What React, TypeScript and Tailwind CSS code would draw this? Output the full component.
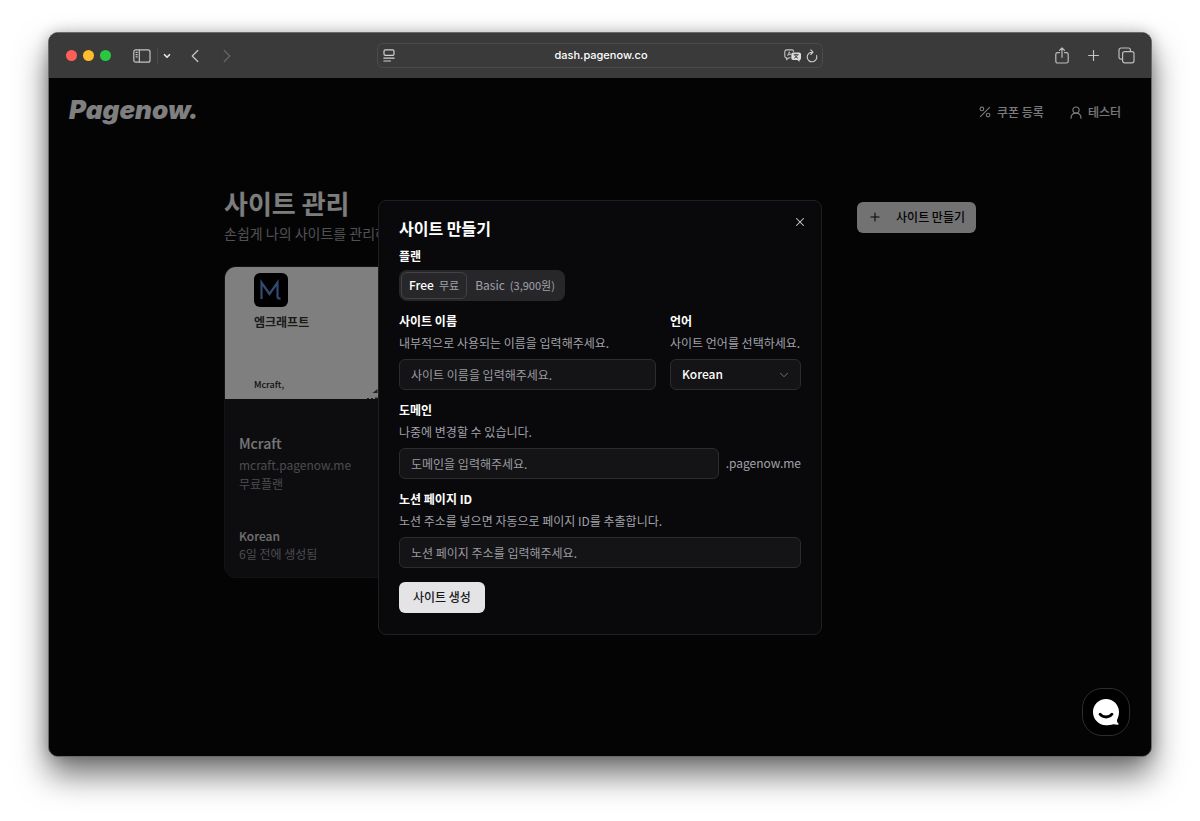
import React, { useState } from "react";
import { ChevronDown, ChevronLeft, ChevronRight, Plus, X } from "lucide-react";

interface FieldProps {
  id: string;
  label: string;
  description: string;
  className?: string;
  children: React.ReactNode;
}

const plans = [
  { name: "Free", price: "무료" },
  { name: "Basic", price: "(3,900원)" },
];

const inputStyle =
  "h-[31px] w-full min-w-0 rounded-md border border-[#2c2c2f] bg-[#141416] px-[11px] text-xs text-white placeholder:text-[#9b9ba3] outline-none";

const SidebarIcon = () => (
  <svg width="18" height="14" viewBox="0 0 18 14" fill="none" stroke="#c4c4c4" strokeWidth="1.2">
    <rect x="0.8" y="0.8" width="16.2" height="12.4" rx="2" />
    <path d="M6.3 1v12M2.6 3.4h2M2.6 5.6h2M2.6 7.8h2" />
  </svg>
);

const ReaderIcon = () => (
  <svg width="12" height="13" viewBox="0 0 12 13" fill="none" stroke="#d0d0d0" strokeWidth="1.2" strokeLinecap="round">
    <rect x="1" y="0.8" width="10" height="5.6" rx="1.4" />
    <path d="M0.9 9.2h10.2M0.9 12h6.6" />
  </svg>
);

const TranslateIcon = () => (
  <svg width="18" height="13" viewBox="0 0 18 13" fill="none">
    <path
      d="M6.5 8.8H4.8L2.6 10.7V8.8A1.8 1.8 0 0 1 .8 7V2.8A1.9 1.9 0 0 1 2.7.9h5.1a1.9 1.9 0 0 1 1.9 1.8"
      stroke="#c4c4c4"
      strokeWidth="1.1"
      strokeLinejoin="round"
    />
    <path d="M3.6 7 5.3 2.8 6.6 6M4.2 5.6h2.1" stroke="#c4c4c4" strokeWidth="0.9" />
    <path d="M9.2 3.4h5.9a1.9 1.9 0 0 1 1.9 1.9v3.9a1.8 1.8 0 0 1-1.4 1.8v1.8L13.2 11h-4a1.9 1.9 0 0 1-1.9-1.9V5.3a1.9 1.9 0 0 1 1.9-1.9Z" fill="#dcdcdc" />
    <path d="M9.6 5.7h5M12.1 4.7v1M10.8 5.9c.4 1.4 1.5 2.6 3.3 3.3M13.4 5.9c-.4 1.4-1.5 2.6-3.3 3.3" stroke="#3a3a3a" strokeWidth="0.9" />
  </svg>
);

const ReloadIcon = () => (
  <svg width="12" height="14" viewBox="0 0 12 14" fill="none" stroke="#cfcfcf" strokeWidth="1.1" strokeLinecap="round" strokeLinejoin="round">
    <path d="M10.6 6.6A4.8 4.8 0 1 1 6.400 3.200M4.800 .8l2.200 2.400-2.200 2.300" />
  </svg>
);

const ShareIcon = () => (
  <svg width="14" height="17" viewBox="0 0 14 17" fill="none" stroke="#bdbdbd" strokeWidth="1.2" strokeLinecap="round" strokeLinejoin="round">
    <path d="M4.4 5.7H2.6A1.8 1.8 0 0 0 .8 7.5v6.7A1.8 1.8 0 0 0 2.6 16h8.8a1.8 1.8 0 0 0 1.8-1.8V7.5a1.8 1.8 0 0 0-1.8-1.8H9.6M7 10.3V1M4.5 3.4 7 .9l2.5 2.5" />
  </svg>
);

const TabsIcon = () => (
  <svg width="17" height="17" viewBox="0 0 17 17" fill="none" stroke="#bdbdbd" strokeWidth="1.2">
    <rect x="4.6" y="4.6" width="11.4" height="11.2" rx="2" />
    <path d="M4.6 12.2H3A2 2 0 0 1 1 10.2V3a2 2 0 0 1 2-2h7.4a2 2 0 0 1 2 2v1.6" />
  </svg>
);

const PercentIcon = () => (
  <svg width="12" height="12" viewBox="0 0 12 12" fill="none" stroke="currentColor" strokeWidth="1.1" strokeLinecap="round">
    <path d="M10.600 1.400 1.400 10.600" />
    <circle cx="2.900" cy="2.900" r="1.800" />
    <circle cx="9.100" cy="9.100" r="1.800" />
  </svg>
);

const UserIcon = () => (
  <svg width="12" height="13" viewBox="0 0 12 13" fill="none" stroke="currentColor" strokeWidth="1.2" strokeLinecap="round">
    <circle cx="6" cy="4.1" r="3.1" />
    <path d="M1 12.2c.1-3 1.9-5 5-5s4.900 2 5 5" />
  </svg>
);

const Toolbar = () => (
  <div className="grid h-[45px] grid-cols-[1fr_minmax(0,446px)_1fr] items-center bg-[#3a3a3a]">
    <div className="flex items-center pl-[17px]">
      <div className="flex gap-1.5">
        <span className="size-[11px] rounded-full bg-[#fe5f58]" />
        <span className="size-[11px] rounded-full bg-[#febb2e]" />
        <span className="size-[11px] rounded-full bg-[#29c840]" />
      </div>
      <button aria-label="Sidebar" className="ml-[22px]">
        <SidebarIcon />
      </button>
      <span className="ml-1.5 h-4 w-px bg-[#4a4a4a]" />
      <button aria-label="Tab groups" className="ml-1 text-[#e4e4e4]">
        <ChevronDown size={10} strokeWidth={4} />
      </button>
      <button aria-label="Back" className="ml-3 text-[#c4c4c4]">
        <ChevronLeft size={22} strokeWidth={1.4} />
      </button>
      <button aria-label="Forward" className="ml-2.5 text-[#666666]">
        <ChevronRight size={22} strokeWidth={1.4} />
      </button>
    </div>
    <div className="flex h-[25px] items-center rounded-md border border-[#4b4b4b] px-1">
      <div className="flex w-9 shrink-0 pl-px">
        <ReaderIcon />
      </div>
      <p className="flex-1 text-center font-['Inter',sans-serif] text-[11px] font-medium text-white">dash.pagenow.co</p>
      <div className="flex shrink-0 items-center gap-1">
        <TranslateIcon />
        <ReloadIcon />
      </div>
    </div>
    <div className="flex items-center justify-end gap-4 pr-4">
      <button aria-label="Share">
        <ShareIcon />
      </button>
      <button aria-label="New tab" className="text-[#c4c4c4]">
        <Plus size={17} strokeWidth={1.6} />
      </button>
      <button aria-label="Tab overview">
        <TabsIcon />
      </button>
    </div>
  </div>
);

const SiteCard = () => (
  <article className="mt-[23px] w-60 overflow-hidden rounded-xl border border-[#27272a] bg-[#1a1a1e]">
    <div className="relative h-[132px] bg-white px-[29px] pt-1.5 text-black">
      <div className="flex size-[34px] items-center justify-center rounded-md bg-black">
        <svg width="24" height="22" viewBox="0 0 24 22" fill="none" stroke="#6595e0" strokeWidth="2.200">
          <path d="M2.500 20V3.500L10.500 15 18.500 3.500V17.500c0 1.500.8 2.200 3 2.200" />
        </svg>
      </div>
      <p className="mt-1.5 text-xs leading-[18px] font-bold text-[#37352f]">엠크래프트</p>
      <p className="mt-[46px] text-[9px] leading-4 font-medium text-[#222222]">Mcraft,</p>
      <svg className="absolute bottom-0 left-[141px]" width="16" height="11" viewBox="0 0 16 11" fill="#444444">
        <path d="M6.500 5 11.500 1v4ZM1 10h2v1H1ZM5 10h2v1H5ZM9 9.500h3V11H9Z" />
      </svg>
    </div>
    <div className="px-3.5 pt-[34px] pb-3.5 text-xs leading-[18px] text-[#96969e]">
      <h2 className="text-sm leading-5 font-medium text-[#ececee]">Mcraft</h2>
      <p className="mt-0.5 leading-5">mcraft.pagenow.me</p>
      <p>무료플랜</p>
      <p className="mt-[34px] font-medium text-[#e4e4e7]">Korean</p>
      <p>6일 전에 생성됨</p>
    </div>
  </article>
);

const Field: React.FC<FieldProps> = ({ id, label, description, className = "", children }) => (
  <div className={className}>
    <label htmlFor={id} className="block text-xs leading-[18px] font-bold text-white">
      {label}
    </label>
    <p id={`${id}-description`} className="mt-1 mb-[7px] text-xs leading-[18px] whitespace-nowrap text-[#a1a1aa]">
      {description}
    </p>
    {children}
  </div>
);

const CreateSiteDialog = () => {
  const [plan, setPlan] = useState("Free");

  return (
    <div
      role="dialog"
      aria-labelledby="dialog-title"
      className="relative w-full max-w-[444px] rounded-lg border border-[#1f1f22] bg-[#09090b] px-5 pt-[19px] pb-[21px]"
    >
      <button aria-label="Close" className="absolute top-3.5 right-3.5 text-[#cfcfd2]">
        <X size={14} strokeWidth={1.8} />
      </button>
      <form className="flex flex-col gap-[11px]" onSubmit={(e) => e.preventDefault()}>
        <h2 id="dialog-title" className="text-base leading-4 font-bold text-white">
          사이트 만들기
        </h2>
        <div role="group" aria-labelledby="plan-label">
          <p id="plan-label" className="text-xs leading-[18px] font-bold text-white">
            플랜
          </p>
          <div className="mt-[5px] inline-flex h-[31px] items-center rounded-lg bg-[#27272a] p-0.5 align-top">
            {plans.map(({ name, price }) => (
              <button
                key={name}
                type="button"
                aria-pressed={plan === name}
                onClick={() => setPlan(name)}
                className={`flex h-full items-center gap-[5px] rounded-md border px-[7px] text-xs ${
                  plan === name ? "border-[#424246] font-medium text-white" : "border-transparent text-[#a1a1aa]"
                }`}
              >
                {name}
                <span className="text-[11px] font-normal text-[#a1a1aa]">{price}</span>
              </button>
            ))}
          </div>
        </div>
        <div className="flex gap-3.5">
          <Field id="site-name" label="사이트 이름" description="내부적으로 사용되는 이름을 입력해주세요." className="min-w-0 flex-1">
            <input id="site-name" placeholder="사이트 이름을 입력해주세요." className={inputStyle} />
          </Field>
          <Field id="language" label="언어" description="사이트 언어를 선택하세요." className="w-[131px]">
            <div className="relative">
              <select id="language" className={`${inputStyle} appearance-none font-medium`}>
                <option>Korean</option>
              </select>
              <ChevronDown size={14} strokeWidth={1.6} className="pointer-events-none absolute top-[9px] right-2.5 text-[#77777c]" />
            </div>
          </Field>
        </div>
        <Field id="domain" label="도메인" description="나중에 변경할 수 있습니다.">
          <div className="flex items-center gap-[7px]">
            <input id="domain" placeholder="도메인을 입력해주세요." className={inputStyle} />
            <span className="text-xs text-[#a1a1aa]">.pagenow.me</span>
          </div>
        </Field>
        <Field id="notion-page" label="노션 페이지 ID" description="노션 주소를 넣으면 자동으로 페이지 ID를 추출합니다.">
          <input id="notion-page" placeholder="노션 페이지 주소를 입력해주세요." className={inputStyle} />
        </Field>
        <button type="submit" className="mt-[3px] h-[31px] self-start rounded-md bg-[#e4e4e7] px-3.5 text-xs font-medium text-[#18181b]">
          사이트 생성
        </button>
      </form>
    </div>
  );
};

const App = () => {
  return (
    <div className="flex min-h-screen bg-white px-12 pt-8 pb-16 font-['Noto_Sans_CJK_KR',sans-serif]">
      <div className="flex flex-1 flex-col overflow-hidden rounded-[10px] border border-[#6a6a6a] bg-[#09090b] shadow-[0_18px_32px_rgba(0,0,0,0.55),0_0_14px_rgba(0,0,0,0.22)]">
        <Toolbar />
        <div className="relative flex-1">
          <header className="flex h-[68px] items-center justify-between pr-[30px] pl-5">
            <a href="#" className="pb-1 font-['Inter',sans-serif] text-[26px] leading-8 font-black text-white italic">
              Pagenow.
            </a>
            <nav className="flex gap-[26px] text-xs font-medium text-[#f4f4f5]">
              <a href="#" className="flex items-center gap-1.5">
                <PercentIcon />
                쿠폰 등록
              </a>
              <a href="#" className="flex items-center gap-1.5">
                <UserIcon />
                테스터
              </a>
            </nav>
          </header>
          <main className="mx-auto max-w-[752px] pt-[41px]">
            <div className="flex items-center justify-between">
              <div>
                <h1 className="text-[26px] leading-8 font-bold text-[#fafafa]">사이트 관리</h1>
                <p className="mt-1 text-sm leading-5 text-[#a1a1aa]">손쉽게 나의 사이트를 관리하세요.</p>
              </div>
              <button className="mt-1 flex h-[31px] items-center gap-3.5 rounded-md bg-[#e4e4e7] px-[11px] text-xs font-medium text-[#09090b]">
                <Plus size={14} strokeWidth={1.8} />
                사이트 만들기
              </button>
            </div>
            <SiteCard />
          </main>
          <div className="absolute inset-0 flex items-center justify-center bg-black/50">
            <CreateSiteDialog />
          </div>
          <button
            aria-label="Chat"
            className="absolute right-[21px] bottom-5 flex size-12 items-center justify-center rounded-[20px] border border-[#2e2e2e] bg-black"
          >
            <svg width="28" height="28" viewBox="0 0 28 28" fill="none">
              <path d="M14 1C21.200 1 27 6.800 27 14c0 3.200-1 5.800-1.900 7.700-.5 1.200.2 2.800 1.300 3.800.6.600.2 1.300-.6 1.200l-4.600-.5C19 27 16.500 27.200 14 27.200 6.800 27.200 1 21.300 1 14S6.800 1 14 1Z" fill="white" />
              <path d="M8 16.200c3.200 3.700 8.800 3.700 12 0" stroke="black" strokeWidth="2.800" strokeLinecap="round" />
            </svg>
          </button>
        </div>
      </div>
    </div>
  );
};

export default App;
